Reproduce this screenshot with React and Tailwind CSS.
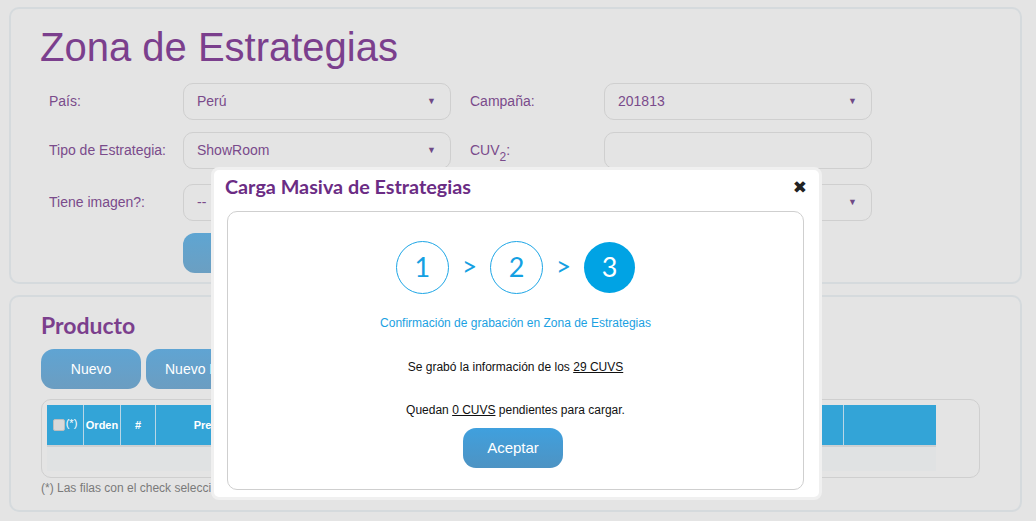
import React from "react";

const arial = { fontFamily: '"Liberation Sans", Arial, sans-serif' };
const lato = { fontFamily: 'Lato, "Open Sans", sans-serif' };

function Select({ value, w = "w-[268px]" }) {
  return (
    <div className={`${w} h-[37px] rounded-[10px] border border-[#cfcfcf] bg-[#e4e4e4] flex items-center justify-between pl-[13px] pr-[14px] text-[14px] text-[#7a4b8b]`}>
      <span>{value}</span>
      <span className="text-[9px] text-[#6f4a86]">▼</span>
    </div>
  );
}

function Label({ children }) {
  return <div className="text-[14px] text-[#7a4b8b] pl-[9px]">{children}</div>;
}

function Step({ n, active }) {
  return active ? (
    <div className="w-[51px] h-[51px] rounded-full bg-[#00a3e4] text-white flex items-center justify-center text-[27px]" style={lato}>
      {n}
    </div>
  ) : (
    <div className="w-[53px] h-[53px] rounded-full border border-[#1ea6e6] text-[#14a0e2] flex items-center justify-center text-[27px]" style={lato}>
      {n}
    </div>
  );
}

export default function App() {
  return (
    <div className="relative w-[1036px] h-[521px] bg-[#e4e4e4] overflow-hidden" style={arial}>
      <div className="pt-[7px] pl-[9px] flex flex-col gap-[11px]">
        {/* Panel 1 */}
        <div className="w-[1013px] h-[277px] rounded-[10px] border-2 border-[#d5dadd] pl-[29px] pt-[14px]">
          <h1 className="text-[40px] leading-[48px] text-[#7b3f8d]">Zona de Estrategias</h1>
          <div className="mt-[12px] grid grid-cols-[143px_268px_153px_268px] gap-y-[12px] items-center">
            <Label>País:</Label>
            <Select value="Perú" />
            <Label><span className="pl-[10px]">Campaña:</span></Label>
            <Select value="201813" />

            <Label>Tipo de Estrategia:</Label>
            <Select value="ShowRoom" />
            <Label><span className="pl-[10px]">CUV<sub className="text-[12px] align-[-3px]">2</sub>:</span></Label>
            <div className="w-[268px] h-[37px] rounded-[10px] border border-[#cfcfcf]" />
          </div>
          <div className="mt-[15px] grid grid-cols-[143px_268px_153px_268px] items-center">
            <Label>Tiene imagen?:</Label>
            <Select value="--" />
            <div />
            <Select value="" />
          </div>
          <div className="ml-[143px] mt-[12px] w-[100px] h-[40px] rounded-[12px] bg-gradient-to-b from-[#5ea5d2] to-[#6b9fc2]" />
        </div>

        {/* Panel 2 */}
        <div className="w-[1013px] h-[217px] rounded-[10px] border-2 border-[#d5dadd] pl-[30px] pt-[13px]">
          <h2 className="text-[23px] leading-[30px] font-bold text-[#7b3f8d]" style={lato}>Producto</h2>
          <div className="mt-[9px] flex gap-[5px]">
            <div className="w-[100px] h-[40px] rounded-[13px] bg-gradient-to-b from-[#5fa4d3] to-[#6b9dc1] text-white text-[14px] flex items-center justify-center">Nuevo</div>
            <div className="w-[130px] h-[40px] rounded-[13px] bg-gradient-to-b from-[#5fa4d3] to-[#6b9dc1] text-white text-[14px] flex items-center pl-[19px]">Nuevo Masivo</div>
          </div>
          <div className="mt-[10px] w-[939px] h-[79px] rounded-[10px] border border-[#cfcfcf] pl-[5px] pt-[5px]">
            <div className="w-[889px] flex h-[40px] bg-[#33a4d7] text-white text-[11px] font-bold">
              <div className="w-[37px] border-r border-[#b9d6e6] flex items-center justify-center gap-[1px]">
                <span className="w-[12px] h-[12px] bg-[#d9d9d9] border border-[#bdbdbd] rounded-[2px]" />
                <span className="font-normal -mt-[3px]">(*)</span>
              </div>
              <div className="w-[37px] border-r border-[#b9d6e6] flex items-center justify-center">Orden</div>
              <div className="w-[35px] border-r border-[#b9d6e6] flex items-center justify-center">#</div>
              <div className="w-[110px] border-r border-[#b9d6e6] flex items-center justify-center">Precio</div>
              <div className="w-[150px] border-r border-[#b9d6e6] flex items-center justify-center">Descripción</div>
              <div className="w-[140px] border-r border-[#b9d6e6] flex items-center justify-center">CUV</div>
              <div className="w-[140px] border-r border-[#b9d6e6] flex items-center justify-center">Imagen</div>
              <div className="w-[148px] border-r border-[#b9d6e6] flex items-center justify-center">Estado</div>
              <div className="flex-1" />
            </div>
            <div className="w-[889px] h-[26px] bg-[#e0e2e3] border-t-2 border-[#cdd0d2]" />
          </div>
          <div className="mt-[1px] text-[12px] text-[#7a7a7a]">
            (*) Las filas con el check seleccionado se guardarán con la estrategia habilitada, las demás quedarán deshabilitada.
          </div>
        </div>
      </div>

      {/* Modal */}
      <div className="absolute left-[211px] top-[167px] w-[611px] h-[333px] bg-white rounded-[8px] border-[3px] border-[#f0f0f0] px-[13px]">
        <div className="flex items-center justify-between h-[36px]">
          <div className="text-[19.8px] font-bold text-[#6b2c84] -mt-[2px] -ml-[2px]" style={lato}>Carga Masiva de Estrategias</div>
          <div className="text-[17px] font-bold text-[#222] -mr-[1px]" style={{ fontFamily: '"DejaVu Sans", sans-serif' }}>✖</div>
        </div>
        <div className="mt-[5px] w-[577px] h-[279px] rounded-[10px] border border-[#cfcfcf] flex flex-col items-center">
          <div className="mt-[29px] flex items-center gap-[13px]">
            <Step n="1" />
            <span className="text-[26px] leading-none text-[#14a0e2] -mt-[4px]" style={lato}>&gt;</span>
            <Step n="2" />
            <span className="text-[26px] leading-none text-[#14a0e2] -mt-[4px]" style={lato}>&gt;</span>
            <Step n="3" active />
          </div>
          <div className="mt-[20px] text-[12px] text-[#1ba1e2]">Confirmación de grabación en Zona de Estrategias</div>
          <div className="mt-[26px] text-[12px] text-[#111]">
            Se grabó la información de los <span className="underline">29 CUVS</span>
          </div>
          <div className="mt-[25px] text-[12px] text-[#111]">
            Quedan <span className="underline">0 CUVS</span> pendientes para cargar.
          </div>
          <div className="mt-[9px] -ml-[5px] w-[100px] h-[40px] rounded-[13px] bg-gradient-to-b from-[#3fa0de] to-[#4d93c3] text-white text-[15px] flex items-center justify-center">
            Aceptar
          </div>
        </div>
      </div>
    </div>
  );
}
